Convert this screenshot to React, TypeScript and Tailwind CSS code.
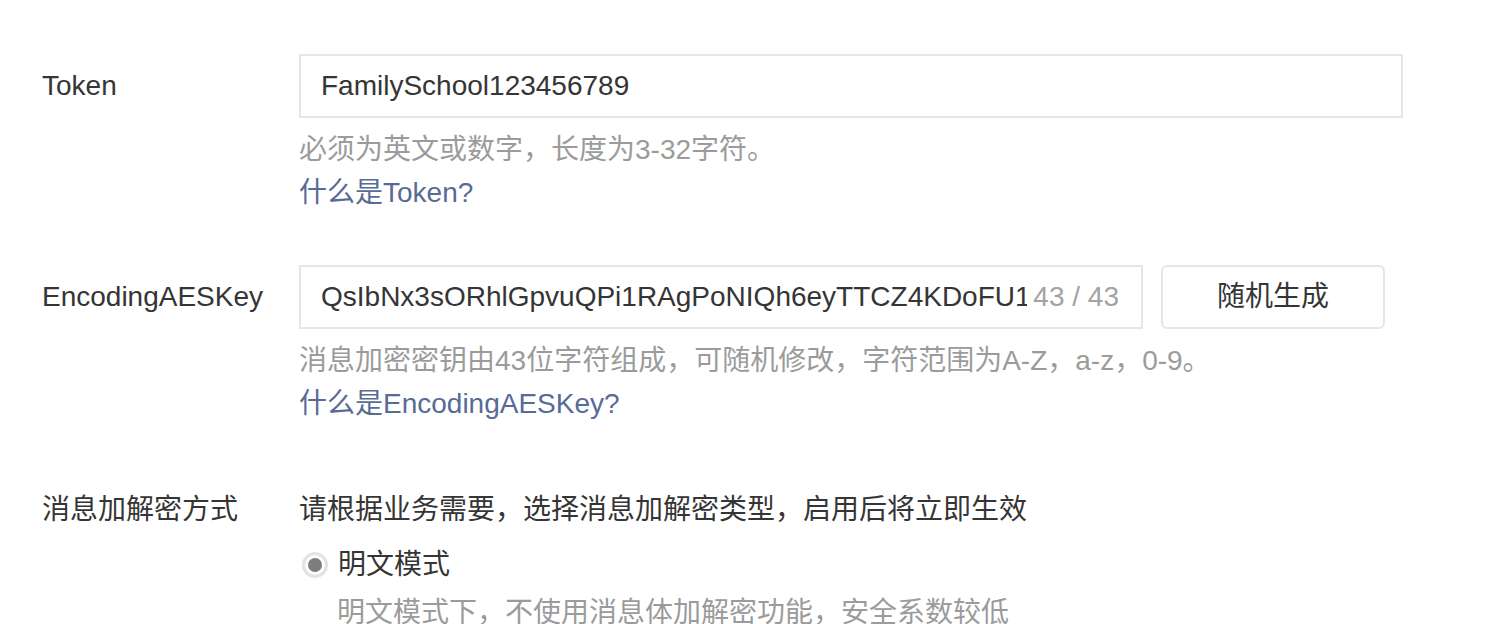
import React from "react";

const font = { fontFamily: '"Liberation Sans", "Noto Sans CJK SC", sans-serif' };

function Hint({ text, link }: { text: string; link: string }) {
  return (
    <div className="mt-[10px] text-[28px] leading-[43px]">
      <p className="text-[#9b9b9b]">{text}</p>
      <a className="text-[#576b95]">{link}</a>
    </div>
  );
}

export default function App() {
  return (
    <div className="w-[1486px] h-[624px] overflow-hidden bg-white text-[#353535]" style={font}>
      {/* Token */}
      <div className="flex pt-[54px] pl-[42px]">
        <div className="w-[257px] text-[28px] leading-[64px]">Token</div>
        <div>
          <div className="w-[1104px] h-[64px] border-2 border-[#e5e6ea] px-[20px] flex items-center text-[28px]">
            FamilySchool123456789
          </div>
          <Hint text="必须为英文或数字，长度为3-32字符。" link="什么是Token?" />
        </div>
      </div>

      {/* EncodingAESKey */}
      <div className="flex mt-[51px] pl-[42px]">
        <div className="w-[257px] text-[28px] leading-[64px]">EncodingAESKey</div>
        <div>
          <div className="flex gap-[18px]">
            <div className="w-[844px] h-[64px] border-2 border-[#e5e6ea] pl-[20px] pr-[22px] flex items-center text-[28px]">
              <span className="flex-1 overflow-hidden whitespace-nowrap">
                QsIbNx3sORhlGpvuQPi1RAgPoNIQh6eyTTCZ4KDoFU1
              </span>
              <span className="text-[#a3a3a3] whitespace-nowrap pl-[6px]">43 / 43</span>
            </div>
            <button className="w-[224px] h-[64px] border-2 border-[#e5e6ea] rounded-[6px] text-[28px] text-[#353535] bg-white">
              随机生成
            </button>
          </div>
          <Hint
            text="消息加密密钥由43位字符组成，可随机修改，字符范围为A-Z，a-z，0-9。"
            link="什么是EncodingAESKey?"
          />
        </div>
      </div>

      {/* 消息加解密方式 */}
      <div className="flex mt-[63px] pl-[42px] text-[28px] leading-[43px]">
        <div className="w-[257px]">消息加解密方式</div>
        <div>
          <p>请根据业务需要，选择消息加解密类型，启用后将立即生效</p>
          <div className="flex items-center mt-[12px] pl-[3px] gap-[10px]">
            <span className="w-[26px] h-[26px] rounded-full border-[3px] border-[#e3e3e3] flex items-center justify-center">
              <span className="w-[14px] h-[14px] rounded-full bg-[#7d7d7d]" />
            </span>
            <span>明文模式</span>
          </div>
          <p className="pl-[38px] mt-[5px] text-[#9b9b9b]">明文模式下，不使用消息体加解密功能，安全系数较低</p>
        </div>
      </div>
    </div>
  );
}
